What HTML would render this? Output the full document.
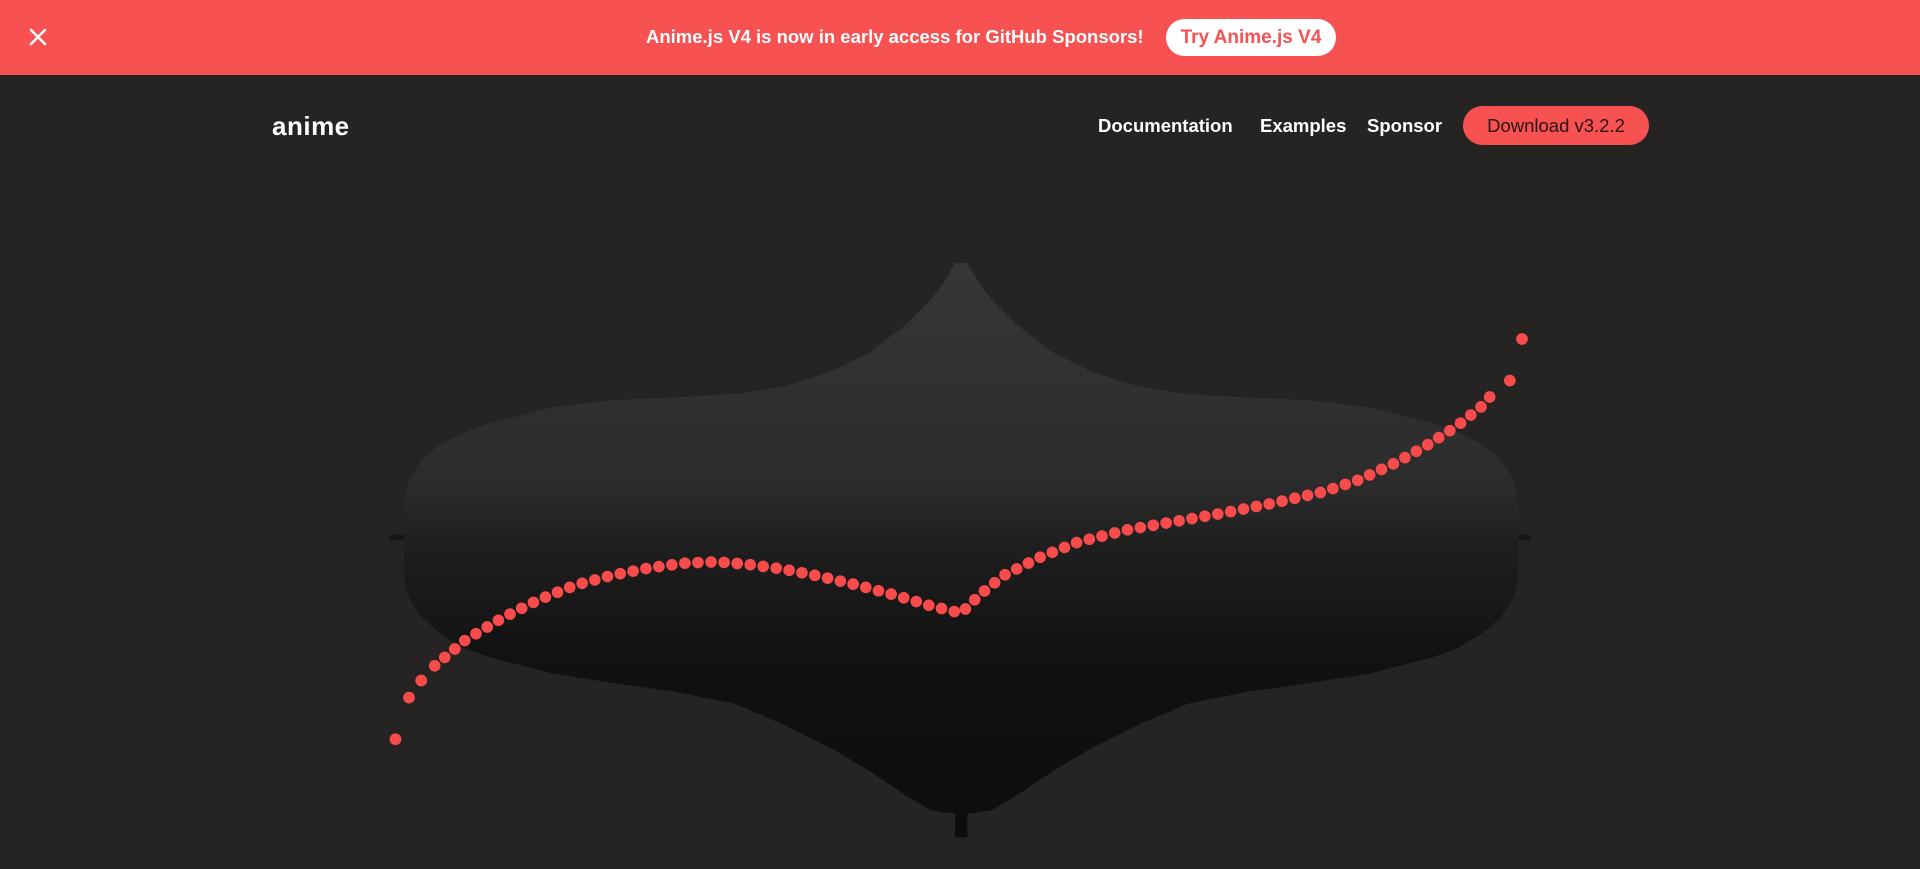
<!DOCTYPE html>
<html><head><meta charset="utf-8"><style>
*{margin:0;padding:0;box-sizing:border-box}
body{width:1920px;height:869px;overflow:hidden;background:#252423;font-family:"Liberation Sans",sans-serif}
.banner{position:absolute;left:0;top:0;width:1920px;height:75px;background:#f85151;color:#fff}
.banner .x{position:absolute;left:27px;top:26px;width:22px;height:22px}
.banner .msg{position:absolute;left:646px;top:26px;font-size:18.5px;font-weight:bold;white-space:nowrap}
.banner .btn{position:absolute;left:1166px;top:19px;width:170px;height:37px;border-radius:19px;background:#fff;color:#f85151;font-size:19px;font-weight:bold;text-align:center;line-height:37px}
.logo{position:absolute;left:272px;top:111px;color:#fff;font-size:26px;letter-spacing:0.5px;font-weight:bold}
.nav{position:absolute;top:115px;color:#fff;font-size:18.5px;font-weight:bold;white-space:nowrap}
.dl{position:absolute;left:1463px;top:106px;width:186px;height:39px;border-radius:20px;background:#f85151;color:#2a1414;font-size:18.5px;text-align:center;line-height:39px}
svg.art{position:absolute;left:0;top:0}
</style></head><body>
<div class="banner">
<svg class="x" viewBox="0 0 22 22"><path d="M4 4L18 18M18 4L4 18" stroke="#fff" stroke-width="2.6" stroke-linecap="round"/></svg>
<div class="msg">Anime.js V4 is now in early access for GitHub Sponsors!</div>
<div class="btn">Try Anime.js V4</div>
</div>
<div class="logo">anime</div>
<div class="nav" style="left:1098px">Documentation</div>
<div class="nav" style="left:1260px">Examples</div>
<div class="nav" style="left:1367px">Sponsor</div>
<div class="dl">Download v3.2.2</div>
<svg class="art" width="1920" height="869" viewBox="0 0 1568 710" preserveAspectRatio="none">
<defs><linearGradient id="g" x1="0" y1="215" x2="0" y2="684" gradientUnits="userSpaceOnUse">
<stop offset="0" stop-color="#363636"/><stop offset="0.38" stop-color="#2c2c2c"/><stop offset="0.5" stop-color="#1e1e1e"/><stop offset="0.7" stop-color="#111"/><stop offset="1" stop-color="#0d0d0d"/></linearGradient></defs>
<path fill="url(#g)" d="M330,405 L335,390 L345,375 L360,363 L380,353 L400,346 L450,333 L500,327 L550,325 L600,322 L640,316 L680,303 L710,288 L740,265 L760,245 L770,232 L780,215 L790,215 L800,232 L810,245 L830,265 L860,288 L890,303 L930,316 L970,322 L1020,325 L1070,327 L1120,333 L1170,346 L1190,353 L1210,363 L1225,375 L1235,390 L1240,405 L1240,475 L1235,490 L1225,505 L1210,518 L1190,530 L1170,537 L1120,550 L1070,558 L1020,565 L970,575 L930,592 L890,612 L860,630 L830,650 L810,662 L790,665 L790,684 L780,684 L780,665 L760,662 L740,650 L710,630 L680,612 L640,592 L600,575 L550,565 L500,558 L450,550 L400,537 L380,530 L360,518 L345,505 L335,490 L330,475 Z"/>
<rect x="318" y="437" width="12" height="4" fill="#161616"/><rect x="1240" y="437" width="10" height="4" fill="#161616"/>
<path fill="none" stroke="#f84c4c" stroke-width="9.5" stroke-linecap="round" stroke-dasharray="0 10.7" d="M355,544 L380,523 L410,505 L440,490 L470,478 L500,470 L530,464 L560,460 L585,459 L610,461 L640,465 L670,471 L700,478 L730,486 L760,495 L785,501 L800,486 L820,470 L850,455 L880,443 L920,433 L960,426 L1000,419 L1040,411 L1080,402 L1110,392 L1140,378 L1165,364 L1190,348 L1210,332 L1222,318"/>
<g fill="#f84c4c"><circle cx="323" cy="604" r="4.8"/><circle cx="334" cy="570" r="4.8"/><circle cx="344" cy="556" r="4.8"/><circle cx="1233" cy="311" r="4.8"/><circle cx="1243" cy="277" r="4.8"/></g>
</svg>
</body></html>
